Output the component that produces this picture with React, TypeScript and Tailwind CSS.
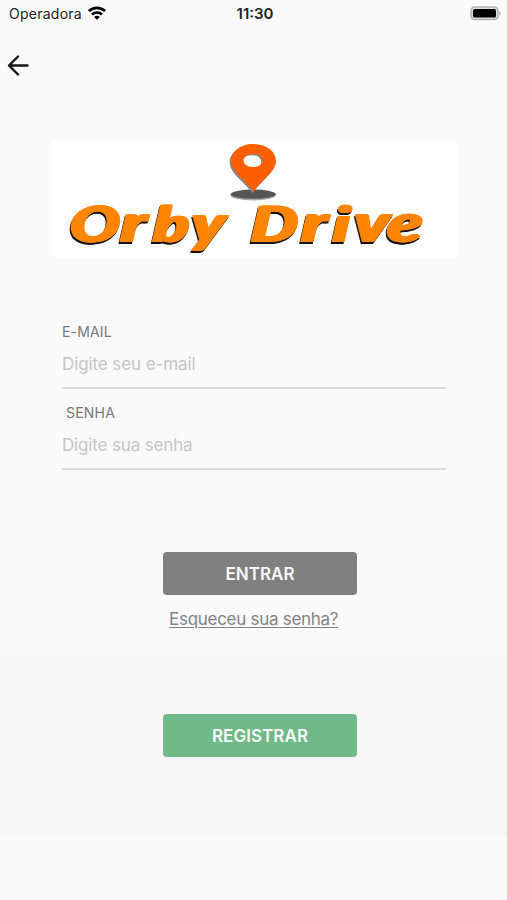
import React from "react";

function Logo() {
  return (
    <svg width="405" height="116" viewBox="0 0 405 116" className="ml-[52px] bg-white">
      <ellipse cx="201" cy="54.5" rx="22.5" ry="5" fill="#aaa" />
      <ellipse cx="201.3" cy="53.2" rx="22.5" ry="4.6" fill="#555" />
      <g fillRule="evenodd">
        <path transform="translate(-1.3 1.2)" fill="#888" d="M202 3C188 3 179 11 179 20C179 31 193 39 202 51C210 39 224 31 224 20C224 11 215 3 202 3ZM201 13C207 13 210.500 16 210.500 19.500C210.500 23 207 26 201 26C195 26 191.500 23 191.500 19.500C191.500 16 195 13 201 13Z" />
        <path fill="#ff5f00" d="M201 3C188 3 179 11 179 20C179 31 193 38 201.500 51C210 38 224 31 224 20C224 11 215 3 201 3ZM201 13C207 13 210.500 16 210.500 19.500C210.500 23 207 26 201 26C195 26 191.500 23 191.500 19.500C191.500 16 195 13 201 13Z" />
      </g>
      <g className="[filter:drop-shadow(2px_0_0_#ff8500)_drop-shadow(2px_0_0_#ff8500)_drop-shadow(-1px_2px_0_#111)]">
        <g transform="translate(0 101) scale(1.3 1) skewX(-3)" fill="#ff8500" className="font-['Lato','Liberation_Sans',sans-serif] text-[50px] font-black italic">
          <text x="11.800 51 76 105">O<tspan className="text-[54px]">r</tspan>b<tspan className="text-[52px]">y</tspan></text>
          <text x="151 190 214 230 256">D<tspan className="text-[54px]">r</tspan>i<tspan className="text-[54px]">ve</tspan></text>
        </g>
      </g>
    </svg>
  );
}

function StatusBar() {
  return (
    <div className="flex h-7 items-center pl-[9px] pr-[6px] text-[#222]">
      <div className="flex flex-1 items-center gap-[6px]">
        <span className="-mt-px w-[73px] text-[14px] tracking-[0.25px]">Operadora</span>
        <svg width="18" height="14" viewBox="0 0 18 14" fill="none" stroke="#000" strokeWidth="2.700" className="-mt-[2px]">
          <path d="M.9 5.100C5.500.8 12.500.8 17.100 5.100" />
          <path d="M4 8.500C7 5.900 11 5.900 14 8.500" />
          <path d="M9 13.700L6.100 10.900C7.900 9.500 10.100 9.500 11.900 10.900Z" fill="#000" stroke="none" />
        </svg>
      </div>
      <span className="mt-px text-[15px] font-semibold">11:30</span>
      <div className="flex flex-1 justify-end">
        <svg width="31" height="15" viewBox="0 0 31 15" className="-mt-px">
          <rect x="1" y="1" width="27" height="12.500" rx="3.500" fill="#ddd" stroke="#b4b4b4" strokeWidth="1.500" />
          <rect x="3" y="3" width="23" height="8.500" rx="1.500" fill="#000" />
          <path d="M29 5Q32 7.200 29 9.500Z" fill="#b4b4b4" />
        </svg>
      </div>
    </div>
  );
}

export default function App() {
  return (
    <main className="flex h-[900px] w-[507px] flex-col overflow-hidden bg-[#fafafa] font-['Inter','Liberation_Sans',sans-serif]">
      <StatusBar />
      <div className="h-[113px] pl-[7px] pt-[26px]">
        <svg width="24" height="24" viewBox="0 0 24 24" fill="none" stroke="#161616" strokeWidth="2.400" strokeLinecap="round" strokeLinejoin="round">
          <path d="M20.500 11.500H2.500M11 2.500L2 11.500L11 20.500" />
        </svg>
      </div>
      <Logo />
      <form className="ml-[62px] mt-[65px] w-[384px]">
        <label className="flex h-[67px] flex-col border-b-2 border-[#dadada]">
          <span className="h-[31px] text-[14px] leading-5 tracking-[0.15px] text-[#77787b]">E-MAIL</span>
          <input type="email" placeholder="Digite seu e-mail" className="h-6 bg-transparent p-0 text-[17px] tracking-[-0.1px] outline-none placeholder:text-[#c5c5c7]" />
        </label>
        <label className="mt-[14px] flex h-[67px] flex-col border-b-2 border-[#dadada]">
          <span className="h-[31px] pl-1 text-[14px] leading-5 tracking-[0.2px] text-[#77787b]">SENHA</span>
          <input type="password" placeholder="Digite sua senha" className="h-6 bg-transparent p-0 text-[17px] tracking-[-0.15px] outline-none placeholder:text-[#c5c5c7]" />
        </label>
      </form>
      <div className="ml-[163px] mt-[82px] flex h-[104px] w-[194px] shrink-0 flex-col">
        <button className="h-[43px] shrink-0 rounded-[4px] bg-[#808080] pt-[2px] text-[17px] font-semibold text-[#fafafa]">ENTRAR</button>
        <a className="ml-[6px] mt-[12px] whitespace-nowrap text-[17px] leading-6 tracking-[-0.28px] text-[#818487] underline decoration-1 underline-offset-2">Esqueceu sua senha?</a>
      </div>
      <section className="h-[180px] shrink-0 bg-[#f6f6f6] pl-[163px] pt-[58px]">
        <button className="h-[43px] w-[194px] rounded-[4px] bg-[#70b988] pt-[2px] text-[17px] font-semibold tracking-[0.05px] text-[#fafafa]">REGISTRAR</button>
      </section>
    </main>
  );
}
